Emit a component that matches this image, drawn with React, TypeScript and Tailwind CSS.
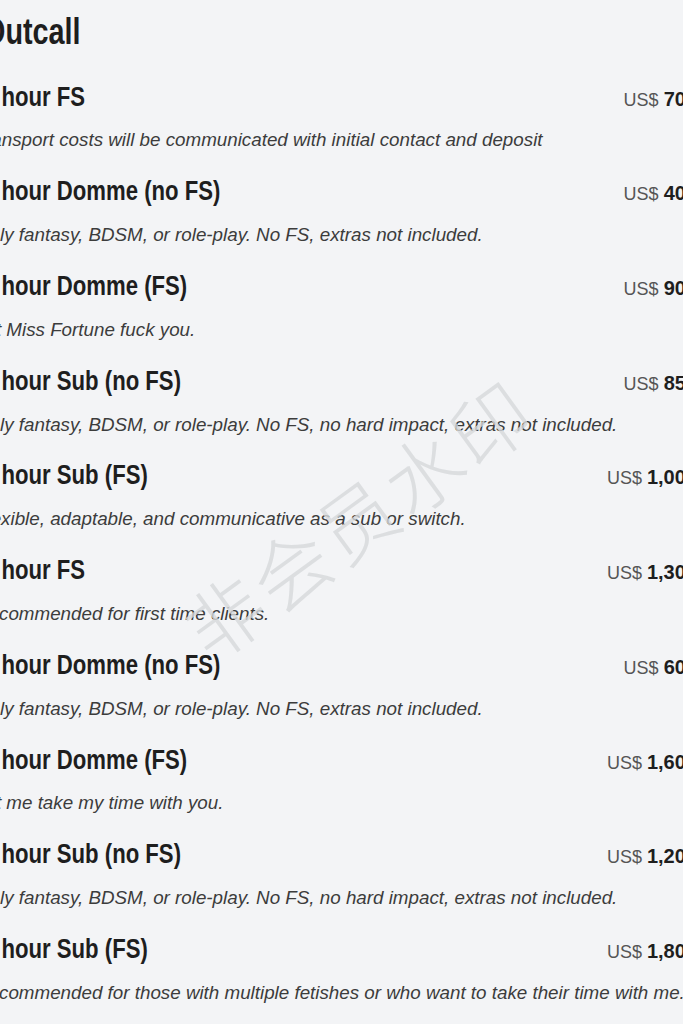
const rates = [
  { name: "1 hour FS", price: "700", note: "Transport costs will be communicated with initial contact and deposit" },
  { name: "1 hour Domme (no FS)", price: "400", note: "Only fantasy, BDSM, or role-play. No FS, extras not included." },
  { name: "1 hour Domme (FS)", price: "900", note: "Let Miss Fortune fuck you." },
  { name: "1 hour Sub (no FS)", price: "850", note: "Only fantasy, BDSM, or role-play. No FS, no hard impact, extras not included." },
  { name: "1 hour Sub (FS)", price: "1,000", note: "Flexible, adaptable, and communicative as a sub or switch." },
  { name: "2 hour FS", price: "1,300", note: "Recommended for first time clients." },
  { name: "2 hour Domme (no FS)", price: "600", note: "Only fantasy, BDSM, or role-play. No FS, extras not included." },
  { name: "2 hour Domme (FS)", price: "1,600", note: "Let me take my time with you." },
  { name: "2 hour Sub (no FS)", price: "1,200", note: "Only fantasy, BDSM, or role-play. No FS, no hard impact, extras not included." },
  { name: "2 hour Sub (FS)", price: "1,800", note: "Recommended for those with multiple fetishes or who want to take their time with me." },
];

export default function App() {
  return (
    <div className="relative h-[1024px] w-[683px] overflow-hidden bg-[#f3f4f6] font-['Liberation_Sans',Arial,sans-serif]">
      <div className="-ml-[17px] w-[714px] pt-[11.5px]">
        <h2 className="inline-block origin-left scale-x-[0.8] whitespace-nowrap text-[36px] font-bold leading-[40px] text-[#1e1e1e]">
          Outcall
        </h2>

        <ul className="mt-[28.2px]">
          {rates.map((r) => (
            <li key={r.name} className="pb-[21.9px]">
              <div className="flex h-[34px] items-baseline justify-between">
                <span className="inline-block origin-left scale-x-[0.82] whitespace-nowrap text-[27px] font-bold leading-[34px] text-[#1e1e1e]">
                  {r.name}
                </span>
                <span className="whitespace-nowrap text-[18px] text-[#555]">
                  US$ <b className="text-[20px] font-bold text-[#1e1e1e]">{r.price}</b>
                </span>
              </div>
              <p className="-ml-[8px] mt-[14.8px] whitespace-nowrap text-[18.8px] italic leading-[24px] text-[#3c3c3c]">
                {r.note}
              </p>
            </li>
          ))}
        </ul>
      </div>

      {/* watermark */}
      <div className="pointer-events-none absolute left-[357px] top-[517px] -translate-x-1/2 -translate-y-1/2 -rotate-[36deg] whitespace-nowrap font-['Noto_Sans_CJK_SC',sans-serif] text-[78px] font-light tracking-[4px] text-[#d6d8db]/80">
        非会员水印
      </div>
    </div>
  );
}
